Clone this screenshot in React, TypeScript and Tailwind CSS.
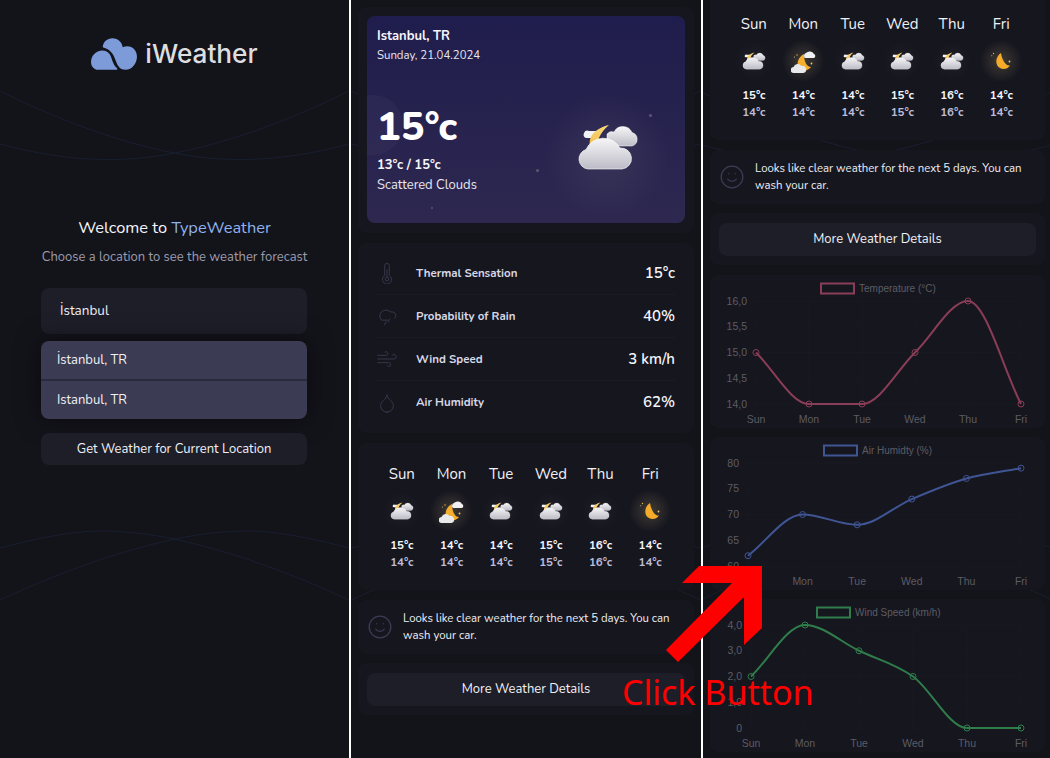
import React from "react";
import { Droplet, Smile, Wind } from "lucide-react";

const days = ["Sun", "Mon", "Tue", "Wed", "Thu", "Fri"];

const forecast = [
  { day: "Sun", icon: "cloud", hi: "15°c", lo: "14°c" },
  { day: "Mon", icon: "mooncloud", hi: "14°c", lo: "14°c" },
  { day: "Tue", icon: "cloud", hi: "14°c", lo: "14°c" },
  { day: "Wed", icon: "cloud", hi: "15°c", lo: "15°c" },
  { day: "Thu", icon: "cloud", hi: "16°c", lo: "16°c" },
  { day: "Fri", icon: "moon", hi: "14°c", lo: "14°c" },
];

const ThermoIcon = ({ size, strokeWidth, className }: { size: number; strokeWidth: number; className: string }) => (
  <svg viewBox="0 0 24 24" width={size} height={size} fill="none" stroke="currentColor" strokeWidth={strokeWidth} className={className}>
    <path d="M14.500 14.800V4a2.500 2.500 0 0 0-5 0v10.800a5 5 0 1 0 5 0z" />
    <circle cx="12" cy="18.500" r="2" />
    <path d="M12 16.500V8" />
  </svg>
);

const RainIcon = ({ size, strokeWidth, className }: { size: number; strokeWidth: number; className: string }) => (
  <svg viewBox="0 0 24 24" width={size} height={size} fill="none" stroke="currentColor" strokeWidth={strokeWidth} className={className}>
    <path d="M6 16.500A6.500 6.500 0 1 1 15.500 7.500h2a4 4 0 0 1 2.500 7.200" />
    <path d="M6 16.500h7" />
    <path d="M11 18l-2 4M15 15l-2 4" />
  </svg>
);

const details = [
  { label: "Thermal Sensation", value: "15°c", Icon: ThermoIcon },
  { label: "Probability of Rain", value: "40%", Icon: RainIcon },
  { label: "Wind Speed", value: "3 km/h", Icon: Wind },
  { label: "Air Humidity", value: "62%", Icon: Droplet },
];

const CloudMoon = ({ className }: { className: string }) => (
  <svg viewBox="0 0 62 47" className={className}>
    <defs>
      <linearGradient id="cloudFill" x1="0" y1="0" x2="0" y2="1">
        <stop offset="0" stopColor="#f6f6f8" />
        <stop offset="1" stopColor="#bdbcc6" />
      </linearGradient>
      <linearGradient id="moonFill" x1="0" y1="0" x2="0" y2="1">
        <stop offset="0" stopColor="#f8d878" />
        <stop offset="1" stopColor="#f3bd52" />
      </linearGradient>
    </defs>
    <path d="M30 22V10A6 6 0 0 1 37 8A10 10 0 0 1 55 8.500A7 7 0 0 1 55 22Z" fill="url(#cloudFill)" stroke="#fff" strokeWidth="0.5" />
    <path d="M9 14a3.500 3.500 0 0 1 3-7h10v7z" fill="#f2f2f4" />
    <path d="M32 1C20 4 11 11 13 22L20 22C21 13 25 7 32 1Z" fill="url(#moonFill)" />
    <path d="M11 45A10 10 0 0 1 9 25.500A19 19 0 0 1 43 24A10.500 10.500 0 0 1 45 45Z" fill="url(#cloudFill)" stroke="#fff" strokeWidth="0.6" />
  </svg>
);

const MoonCloud = ({ className }: { className: string }) => (
  <svg viewBox="0 0 25 23" className={className}>
    <circle cx="6" cy="5" r="0.7" fill="#f7b733" />
    <circle cx="3.500" cy="7" r="0.5" fill="#e8d9a8" />
    <path d="M13 4C7 7 5 14 8 18C11 21.500 17 21 20 17C16 17 13 12 13 4Z" fill="#f5ae2d" />
    <circle cx="20.500" cy="13.500" r="0.9" fill="#f7c65c" />
    <path d="M14 8a3 3 0 0 1 1-5a5 5 0 0 1 8 1a2.200 2.200 0 0 1 0 4z" fill="#f1f1f3" />
    <path d="M3 23a3 3 0 0 1-.5-6a4.500 4.500 0 0 1 8-1a3.500 3.500 0 0 1 2 7z" fill="#e9e9ec" />
  </svg>
);

const Moon = ({ className }: { className: string }) => (
  <svg viewBox="0 0 20 18" className={className}>
    <circle cx="2.500" cy="1.500" r="0.7" fill="#f7b733" />
    <circle cx="0.800" cy="3.800" r="0.5" fill="#e8d9a8" />
    <path d="M10 1C5 4 4 11 7 14.500C10 18 16 18 19 13.500C15 14.500 11 8 10 1Z" fill="#f7ab2a" />
    <circle cx="18.500" cy="9.500" r="0.9" fill="#f0c76a" />
  </svg>
);

const WeatherIcon = ({ type }: { type: string }) => (
  <div className="relative flex h-[28px] w-[36px] items-center justify-center">
    {type === "cloud" && <div className="absolute -inset-[4px] rounded-full bg-[radial-gradient(circle,rgba(255,240,200,0.04),transparent_68%)]" />}
    {type !== "cloud" && <div className="absolute -inset-[6px] rounded-full bg-[radial-gradient(circle,rgba(255,230,150,0.18),transparent_68%)]" />}
    {type === "cloud" && <CloudMoon className="relative h-[18px] w-[24px]" />}
    {type === "mooncloud" && <MoonCloud className="relative h-[23px] w-[25px]" />}
    {type === "moon" && <Moon className="relative h-[18px] w-[20px]" />}
  </div>
);

const Card = ({ className = "", children }: { className?: string; children: React.ReactNode }) => (
  <div className={`rounded-lg bg-[#16161f] ${className}`}>{children}</div>
);

const Forecast = ({ className = "" }: { className?: string }) => (
  <Card className={`h-[147px] px-[19px] pt-[20px] ${className}`}>
    <div className="grid grid-cols-6">
      {forecast.map((f) => (
        <div key={f.day} className="flex flex-col items-center">
          <div className="text-[15px] leading-[22px] text-[#f0f0f5]">{f.day}</div>
          <div className="mt-[12px]">
            <WeatherIcon type={f.icon} />
          </div>
          <div className="mt-[12px] text-[11.500px] font-bold leading-[17px] text-[#f5f5fa]">{f.hi}</div>
          <div className="text-[11.500px] font-bold leading-[17px] text-[#bcbcd6]">{f.lo}</div>
        </div>
      ))}
    </div>
  </Card>
);

const Tip = () => (
  <Card className="mt-[10px] flex h-[54px] items-center gap-[10px] pl-[9px] pr-[8px]">
    <Smile size={26} strokeWidth={1.2} className="shrink-0 text-[#3b3b54]" />
    <p className="text-[11.400px] leading-[17px] text-[#eeeef3]">
      Looks like clear weather for the next 5 days. You can wash your car.
    </p>
  </Card>
);

const DetailsButton = () => (
  <Card className="mt-[9px] px-[9px] pb-[9px] pt-[10px]">
    <button className="block h-[33px] w-full rounded-lg bg-[#1e1e29] pt-[1px] text-[13px] text-[#f0f0f5]">
      More Weather Details
    </button>
  </Card>
);

// chart.js "monotone" interpolation through the data points
function monotonePath(pts: number[][]) {
  const n = pts.length;
  const delta: number[] = [];
  for (let i = 0; i < n - 1; i++) delta.push((pts[i + 1][1] - pts[i][1]) / (pts[i + 1][0] - pts[i][0]));
  const m: number[] = [];
  for (let i = 0; i < n; i++) {
    if (i === 0) m.push(delta[0]);
    else if (i === n - 1) m.push(delta[n - 2]);
    else m.push(Math.sign(delta[i - 1]) !== Math.sign(delta[i]) ? 0 : (delta[i - 1] + delta[i]) / 2);
  }
  for (let i = 0; i < n - 1; i++) {
    if (delta[i] === 0) {
      m[i] = 0;
      m[i + 1] = 0;
      continue;
    }
    const a = m[i] / delta[i];
    const b = m[i + 1] / delta[i];
    const s = a * a + b * b;
    if (s > 9) {
      const t = 3 / Math.sqrt(s);
      m[i] = a * t * delta[i];
      m[i + 1] = b * t * delta[i];
    }
  }
  let d = `M${pts[0][0]} ${pts[0][1]}`;
  for (let i = 0; i < n - 1; i++) {
    const dx = (pts[i + 1][0] - pts[i][0]) / 3;
    d += `C${pts[i][0] + dx} ${pts[i][1] + m[i] * dx} ${pts[i + 1][0] - dx} ${pts[i + 1][1] - m[i + 1] * dx} ${pts[i + 1][0]} ${pts[i + 1][1]}`;
  }
  return d;
}

interface ChartProps {
  label: string;
  color: string;
  values: number[];
  ticks: string[];
  min: number;
  max: number;
  x0: number;
  legendX: number;
  className?: string;
}

const Chart = ({ label, color, values, ticks, min, max, x0, legendX, className = "" }: ChartProps) => {
  const x1 = 311;
  const top = 26;
  const bottom = 129;
  const step = (x1 - x0) / 5;
  const pts = values.map((v, i) => [x0 + i * step, bottom - ((v - min) / (max - min)) * (bottom - top)]);
  const labelColor = "#5c5c63";
  return (
    <Card className={`h-[153px] ${className}`}>
      <svg viewBox="0 0 335 153" className="block h-[153px] w-full" fontFamily="'Liberation Sans', sans-serif">
        {days.map((_, i) => (
          <line key={i} x1={x0 + i * step} x2={x0 + i * step} y1={top} y2={bottom + 4} stroke="#181820" />
        ))}
        {ticks.map((t, i) => {
          const y = top + (i * (bottom - top)) / (ticks.length - 1);
          return (
            <g key={t}>
              <line x1={x0 - 4} x2={x1} y1={y} y2={y} stroke="#181820" />
              <text x={x0 - 9} y={y + 3.500} textAnchor="end" fontSize="10.500" fill={labelColor}>
                {t}
              </text>
            </g>
          );
        })}
        {days.map((d, i) => (
          <text key={d} x={x0 + i * step} y={bottom + 19} textAnchor="middle" fontSize="10.500" fill={labelColor}>
            {d}
          </text>
        ))}
        <rect x={legendX} y={8.500} width={33} height={10} fill="none" stroke={color} strokeWidth="2" />
        <text x={legendX + 38} y={17} fontSize="10" fill={labelColor}>
          {label}
        </text>
        <path d={monotonePath(pts)} fill="none" stroke={color} strokeWidth="2" />
        {pts.map((p, i) => (
          <circle key={i} cx={p[0]} cy={p[1]} r="3" fill="none" stroke={color} strokeWidth="1" />
        ))}
      </svg>
    </Card>
  );
};

// faint wave lines behind the cards
const Waves = () => (
  <svg viewBox="0 0 349 758" className="absolute inset-0 h-full w-full" fill="none" stroke="#181f30" strokeWidth="1">
    <path d="M0 91C56 119 118 142 174 153C220 162 275 164 349 144" />
    <path d="M0 91C56 119 118 142 174 153C220 162 275 164 349 144" transform="translate(349 0) scale(-1 1)" />
    <path d="M0 548C30 540 70 531 100 531C125 531 150 534 174 539C235 552 295 575 349 600" />
    <path d="M0 548C30 540 70 531 100 531C125 531 150 534 174 539C235 552 295 575 349 600" transform="translate(349 0) scale(-1 1)" />
  </svg>
);

const Panel = ({ className = "", children }: { className?: string; children: React.ReactNode }) => (
  <div className={`relative h-full overflow-hidden bg-[#13131a] ${className}`}>
    <Waves />
    <div className="relative">{children}</div>
  </div>
);

const Logo = () => (
  <svg viewBox="0 0 48 33" className="h-[34px] w-[49px]">
    <path
      d="M2 24.500C2 18 7 13 13 13c3.500 0 5.500 1.500 7.500 4 2 3.500 2.500 9.500 7 13.500.5.500.5 1.500-.5 1.500H9c-4 0-7-3.500-7-7.500z"
      fill="#7c9bd8"
    />
    <path
      d="M13.500 10C13.500 4.500 18 1 23 1c5.500 0 9.500 4 10 9 1.500-.8 3-1.200 4.500-1.200C43 8.800 47 13 47 19c0 7-5 13-11 13-3.500 0-5.500-1-7.500-4-2.500-4-3-9-6.500-13-2-2.200-5-4-8.500-5z"
      fill="#7c9bd8"
    />
  </svg>
);

const RedArrow = () => (
  <svg viewBox="0 0 100 100" className="absolute left-[664px] top-[564px] h-[100px] w-[100px]">
    <polygon points="35,2 18,19 68,19 2,86 14,98 80,33 80,81 98,64 98,2" fill="#ff0000" />
  </svg>
);

export default function App() {
  return (
    <div className="relative h-[758px] w-[1050px] overflow-hidden bg-white font-['Nunito','Lato',sans-serif]">
      <div className="flex h-full gap-[2px]">
        {/* welcome screen */}
        <Panel className="w-[349px] shrink-0">
          <div className="flex justify-center gap-[7px] pr-[2px] pt-[37px]">
            <Logo />
            <span className="font-['Inter',sans-serif] text-[26.200px] font-medium leading-[34px] text-[#dedee0]">
              iWeather
            </span>
          </div>
          <div className="mt-[145px] text-center text-[16.400px] leading-[24px] text-[#f5f5fa]">
            Welcome to <span className="text-[#8fb2ee]">TypeWeather</span>
          </div>
          <div className="mt-[7px] text-center text-[13px] leading-[20px] text-[#9c9cae]">
            Choose a location to see the weather forecast
          </div>
          <div className="ml-[41px] mr-[42px] mt-[21px] flex flex-col">
            <div className="flex h-[46px] items-center rounded-lg bg-[#1e1e29] pl-[19px] pt-[1px] text-[13.500px] text-[#f0f0f5]">
              İstanbul
            </div>
            <div className="mt-[7px] overflow-hidden rounded-lg bg-[#3b3b54] shadow-[0_0_24px_rgba(0,0,0,0.5)]">
              <div className="flex h-[40px] items-center border-b-2 border-[#2a2a3d] pl-[16px] pt-[2px] text-[13px] text-[#f0f0f5]">
                İstanbul, TR
              </div>
              <div className="flex h-[38px] items-center pl-[16px] pt-[2px] text-[13px] text-[#f0f0f5]">Istanbul, TR</div>
            </div>
            <button className="mt-[14px] h-[32px] rounded-lg bg-[#1e1e29] pt-[2px] text-[13px] text-[#f0f0f5]">
              Get Weather for Current Location
            </button>
          </div>
        </Panel>

        {/* weather screen */}
        <Panel className="w-[350px] shrink-0">
          <div className="mx-[7px] flex flex-col pt-[7px]">
            <Card className="h-[226px] p-[9px]">
              <div className="relative h-[207px] overflow-hidden rounded-lg bg-[linear-gradient(180deg,#1f1d4d,#2e2850)] px-[10px] pt-[10px]">
                <div className="absolute left-0 top-[79px] h-[60px] w-[36px] rounded-r-full bg-white/[0.03]" />
                <div className="absolute left-[175px] top-[75px] h-[130px] w-[130px] rounded-full bg-[radial-gradient(circle,rgba(255,240,200,0.07),transparent_68%)]" />
                <span className="absolute left-[282px] top-[98px] h-[3px] w-[3px] rounded-full bg-[#5e5670]" />
                <span className="absolute left-[169px] top-[153px] h-[3px] w-[3px] rounded-full bg-[#5e5670]" />
                <span className="absolute left-[64px] top-[191px] h-[2px] w-[2px] rounded-full bg-[#5e5670]" />
                <div className="relative text-[13px] font-bold leading-[20px] text-[#f5f5fa]">Istanbul, TR</div>
                <div className="relative mt-[1px] text-[11.400px] leading-[17px] text-[#e6e6ee]">Sunday, 21.04.2024</div>
                <div className="relative mt-[38px] text-[39.500px] font-extrabold leading-[50px] text-white">15°c</div>
                <div className="relative mt-[3px] text-[13px] font-bold leading-[20px] text-[#f5f5fa]">13°c / 15°c</div>
                <div className="relative text-[13px] leading-[20px] text-[#e6e6ee]">Scattered Clouds</div>
                <CloudMoon className="absolute left-[210px] top-[108px] h-[47px] w-[62px]" />
              </div>
            </Card>

            <Card className="mt-[10px] h-[190px] pl-[18px] pr-[19px] pt-[9px]">
              {details.map(({ label, value, Icon }, i) => (
                <div
                  key={label}
                  className={`flex h-[43px] items-center ${i < 3 ? "border-b border-[#1b1b24]" : ""}`}
                >
                  <Icon size={22} strokeWidth={1} className="shrink-0 text-[#3a3a50]" />
                  <span className="ml-[18px] flex-1 pt-[1px] text-[11.500px] font-bold text-[#d8d8e6]">{label}</span>
                  <span className="text-[15px] font-semibold text-[#f5f5fa]">{value}</span>
                </div>
              ))}
            </Card>

            <Forecast className="mt-[10px]" />
            <Tip />
            <DetailsButton />
          </div>
        </Panel>

        {/* details screen */}
        <Panel className="min-w-0 flex-1">
          <div className="ml-[7px] mr-[5px] flex flex-col">
            <Forecast className="-mt-[7px]" />
            <Tip />
            <DetailsButton />
            <Chart
              className="mt-[10px]"
              label="Temperature (°C)"
              color="#8a3d56"
              values={[15, 14, 14, 15, 16, 14]}
              ticks={["16,0", "15,5", "15,0", "14,5", "14,0"]}
              min={14}
              max={16}
              x0={46}
              legendX={111}
            />
            <Chart
              className="mt-[9px]"
              label="Air Humidty (%)"
              color="#3f5594"
              values={[62, 70, 68, 73, 77, 79]}
              ticks={["80", "75", "70", "65", "60"]}
              min={60}
              max={80}
              x0={38}
              legendX={114}
            />
            <Chart
              className="mt-[9px]"
              label="Wind Speed (km/h)"
              color="#2f7d4a"
              values={[2, 4, 3, 2, 0, 0]}
              ticks={["4,0", "3,0", "2,0", "1,0", "0"]}
              min={0}
              max={4}
              x0={41}
              legendX={107}
            />
          </div>
        </Panel>
      </div>

      <RedArrow />
      <div className="absolute left-[622px] top-[668px] font-['Noto_Sans',sans-serif] text-[34px] leading-[48px] text-[#ff0000]">
        Click Button
      </div>
    </div>
  );
}
